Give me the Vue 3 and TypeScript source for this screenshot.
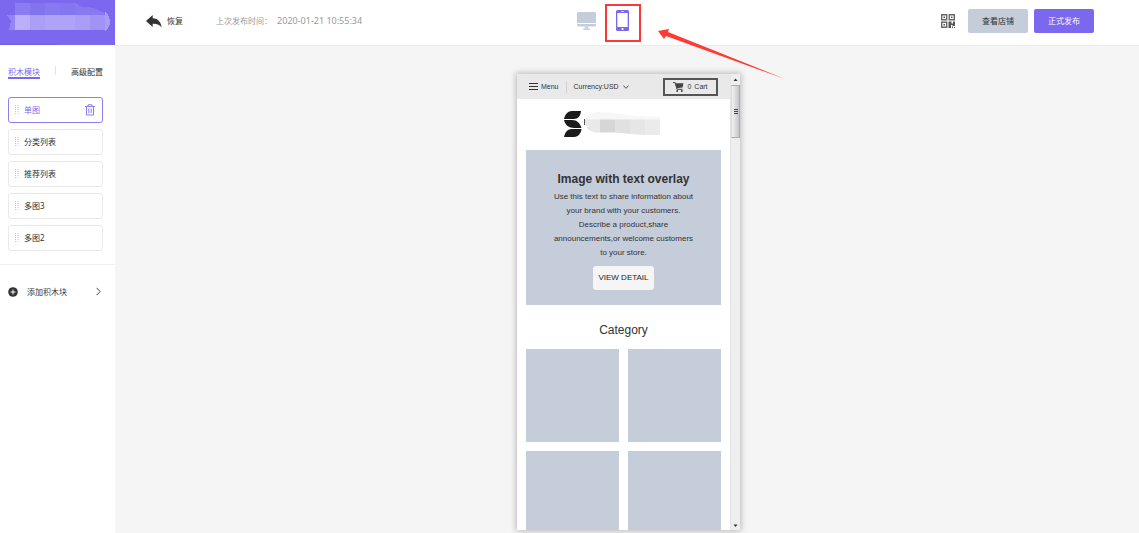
<script setup lang="ts">
import { ref } from 'vue'

interface Block { id: number; name: string }

const blocks: Block[] = [
  { id: 1, name: '单图' },
  { id: 2, name: '分类列表' },
  { id: 3, name: '推荐列表' },
  { id: 4, name: '多图3' },
  { id: 5, name: '多图2' },
]
const activeBlock = ref(1)
const activeTab = ref('blocks')
const lines: string[] = [
  'Use this text to share information about',
  'your brand with your customers.',
  'Describe a product,share',
  'announcements,or welcome customers',
  'to your store.',
]
</script>

<template>
  <div class="app">
    <aside class="sidebar">
      <div class="brand">
        <svg width="115" height="45" viewBox="0 0 115 45" shape-rendering="crispEdges" aria-hidden="true">
          <path d="M15 3h15v12H15z" fill="#8b7cf1" />
          <path d="M30 3h15v12H30z" fill="#8273ef" />
          <path d="M45 3h30l7 4h8l8 3 7 3v2H45z" fill="#8879f1" />
          <path d="M60 3h15v12H60z" fill="#8475f0" />
          <path d="M7 15h8v15H9l2-9z" fill="#9385f2" />
          <path d="M15 15h15v15H15z" fill="#baaff8" />
          <path d="M30 15h15v15H30z" fill="#aa9ef6" />
          <path d="M45 15h30v15H45z" fill="#afa3f7" />
          <path d="M75 15h15v15H75z" fill="#a99df5" />
          <path d="M90 15h15v15H90z" fill="#a093f3" />
          <path d="M105 12l3 3 2 5v4l-2 4-3 3z" fill="#a99df5" />
          <path d="M0 44h57v1H0z" fill="#7160dc" />
        </svg>
      </div>

      <nav class="tabs">
        <button type="button" class="tab" :class="{ on: activeTab === 'blocks' }" @click="activeTab = 'blocks'">积木模块</button>
        <span class="tab-split"></span>
        <button type="button" class="tab" :class="{ on: activeTab === 'config' }" @click="activeTab = 'config'">高级配置</button>
      </nav>

      <ul class="blocks">
        <li v-for="b in blocks" :key="b.id" class="block" :class="{ active: b.id === activeBlock }">
          <button type="button" class="block-name" @click="activeBlock = b.id">
            <svg class="grip" width="4" height="12" viewBox="0 0 4 12" aria-hidden="true">
              <path d="M.5 1v10M3 1v10" stroke="#c4c4cc" stroke-width="1" stroke-dasharray="1 1" />
            </svg>
            {{ b.name }}
          </button>
          <button v-if="b.id === activeBlock" type="button" class="trash" aria-label="删除">
            <svg width="10" height="12" viewBox="0 0 10 12" fill="none" stroke="#8d7df0" aria-hidden="true">
              <path d="M0 2.5h10M3 2.5V.8h4v1.7M1.5 2.5V11h7V2.5M3.8 4.5v4.7M6.2 4.5v4.7" />
            </svg>
          </button>
        </li>
      </ul>

      <button type="button" class="add">
        <svg width="10" height="10" viewBox="0 0 10 10" aria-hidden="true">
          <circle cx="5" cy="5" r="4.8" fill="#333" />
          <path d="M2.5 5h5M5 2.5v5" stroke="#fff" />
        </svg>
        <span class="add-text">添加积木块</span>
        <svg width="5" height="9" viewBox="0 0 5 9" fill="none" stroke="#444" aria-hidden="true">
          <path d="M.5 .8 4.2 4.5 .5 8.2" />
        </svg>
      </button>
    </aside>

    <div class="workspace">
      <header class="topbar">
        <div class="left">
          <button type="button" class="restore">
            <svg width="16" height="13" viewBox="0 0 16 13" aria-hidden="true">
              <path d="M0 6 6.7 0v3.2C12 3.5 15 7 15.6 12.5 13.5 9.5 11 8.5 6.7 8.7V12z" fill="#333" />
            </svg>
            恢复
          </button>
          <p class="published">上次发布时间： <time>2020-01-21 10:55:34</time></p>
        </div>

        <div class="devices">
          <button type="button" class="device" aria-label="电脑">
            <svg width="19" height="18" viewBox="0 0 19 18" aria-hidden="true">
              <path d="M1.5 0h16Q19 0 19 1.5V11H0V1.5Q0 0 1.5 0z" fill="#c5ccda" />
              <path d="M0 12h19v1q0 1.5-1.5 1.5h-16Q0 14.500 0 13z" fill="#c5ccda" />
              <path d="M8 14h3l.5 2.500H13V18H6v-1.500h1.500z" fill="#ccd2df" />
            </svg>
          </button>
          <button type="button" class="device marked" aria-label="手机">
            <svg width="13" height="21" viewBox="0 0 13 21" aria-hidden="true">
              <path fill-rule="evenodd" d="M1.5 0h10Q13 0 13 1.5v18Q13 21 11.5 21h-10Q0 21 0 19.500v-18Q0 0 1.500 0zM1.300 3v14h10.400V3z" fill="#7b68ee" />
              <path d="M5 1.500h3" stroke="#d5cffb" />
              <circle cx="6.500" cy="19" r="1.100" fill="#fff" />
            </svg>
          </button>
          <svg class="pointer" width="128" height="51" viewBox="0 0 128 51" aria-hidden="true">
            <path d="M0 2 11 0 10 3 127 50 8 7 6 10z" fill="#ff3a33" />
          </svg>
        </div>

        <div class="right">
          <button type="button" class="qr" aria-label="二维码">
            <svg width="14" height="14" viewBox="0 0 14 14" aria-hidden="true">
              <path d="M.7.7h5v5h-5zM8.300.7h5v5h-5zM.7 8.300h5v5h-5z" fill="none" stroke="#666" stroke-width="1.400" />
              <path d="M2.500 2.500h1.500v1.500H2.500zM10 2.500h1.500v1.500H10zM2.500 10h1.500v1.500H2.500zM7.500 7.500h3v2h1.500V7.500h2v4.500h-2.500v-1h-1.500v3H7.500zM11 12.500h1V14h-1zM13 13h1v1h-1z" fill="#555" />
            </svg>
          </button>
          <button type="button" class="action view">查看店铺</button>
          <button type="button" class="action publish">正式发布</button>
        </div>
      </header>

      <main class="canvas">
        <section class="phone">
          <div class="screen">
            <div class="shop-bar">
              <button type="button" class="menu">
                <svg width="9" height="7" viewBox="0 0 9 7" aria-hidden="true">
                  <path d="M0 .5h9M0 3.500h9M0 6.500h9" stroke="#333" />
                </svg>
                Menu
              </button>
              <button type="button" class="currency">
                Currency:USD
                <svg width="6" height="4" viewBox="0 0 6 4" fill="none" stroke="#3f5a57" aria-hidden="true">
                  <path d="M.3.500 3 3.300 5.700.500" />
                </svg>
              </button>
              <button type="button" class="cart">
                <svg width="11" height="10" viewBox="0 0 11 10" aria-hidden="true">
                  <path d="M0 .6h2.200L4 7.300h5.500" fill="none" stroke="#444" />
                  <path d="M2.200 1.300H10.500L9.500 5.500 3.500 6.200z" fill="#444" />
                  <circle cx="4.200" cy="8.900" r="1" fill="#444" />
                  <circle cx="8.800" cy="8.900" r="1" fill="#444" />
                </svg>
                <span>0</span><span>Cart</span>
              </button>
            </div>

            <div class="shop-logo">
              <svg width="97" height="26" viewBox="0 0 97 26" aria-hidden="true">
                <path d="M0 8C1 3 4 0 8 0h9c-.5 5-3 8-7 8z" fill="#1b1b1b" />
                <path d="M0 9h8c5 0 8 3 9.500 8H10C5 17 1 14 0 9z" fill="#1b1b1b" />
                <path d="M0 26c1-5 3.500-8 8-8h9.500c-.5 4-3 8-7.500 8z" fill="#1b1b1b" />
                <path d="M20.500 8v6" stroke="#555" />
                <path d="M21 8Q24 1 34 1l15 1 24 3 23 1v3H21z" fill="#f7f7f7" />
                <path d="M21 8.500h15v13h-6l-6-3-3-6z" fill="#e9e9e9" />
                <path d="M36 8.500h15v13H36z" fill="#d6d6d6" />
                <path d="M51 8.500h15V23l-15-1.500z" fill="#e1e1e1" />
                <path d="M66 8.500h15V24l-15-1z" fill="#e6e6e6" />
                <path d="M81 8.500h15V24H81z" fill="#ebebeb" />
              </svg>
            </div>

            <article class="hero">
              <h1>Image with text overlay</h1>
              <p><span v-for="l in lines" :key="l">{{ l }}</span></p>
              <button type="button" class="detail">VIEW DETAIL</button>
            </article>

            <h2>Category</h2>
            <div class="tiles">
              <div v-for="n in 4" :key="n" class="tile"></div>
            </div>
          </div>

          <div class="scroll" aria-hidden="true">
            <svg width="9" height="11" viewBox="0 0 9 11"><path d="M2.500 7 4.500 4.500 6.500 7z" fill="#333" /></svg>
            <div class="thumb"><i></i><i></i><i></i></div>
            <svg class="down" width="9" height="9" viewBox="0 0 9 9"><path d="M2.500 3.500h4L4.500 6z" fill="#333" /></svg>
          </div>
        </section>
      </main>
    </div>
  </div>
</template>

<style>
body { margin: 0; }
</style>

<style scoped>
* { box-sizing: border-box; }
.app {
  display: flex;
  min-height: 100vh;
  font: 8px/12px "Noto Sans", "Noto Sans CJK SC", sans-serif;
  color: #333;
  background: #f5f5f5;
}
button {
  margin: 0;
  padding: 0;
  border: 0;
  background: none;
  color: inherit;
  font: inherit;
  cursor: pointer;
}
svg { display: block; flex: none; }
h1, h2, p, ul { margin: 0; padding: 0; }

.sidebar { flex: none; width: 115px; background: #fff; }
.brand { height: 45px; background: #7b68ee; }
.tabs {
  display: flex;
  align-items: flex-start;
  justify-content: space-between;
  padding: 21px 12px 0 8px;
}
.tab { height: 13px; border-bottom: 2px solid transparent; line-height: 11px; }
.tab.on { color: #7b68ee; border-color: #7b68ee; }
.tab-split { width: 1px; height: 9px; background: #e4e4e4; }
.blocks {
  display: flex;
  flex-direction: column;
  gap: 6px;
  padding: 18px 12px 13px 8px;
  list-style: none;
  border-bottom: 1px solid #f0f0f0;
}
.block {
  display: flex;
  align-items: center;
  height: 26px;
  padding: 0 7px 0 6px;
  border: 1px solid #e9e9e9;
  border-radius: 3px;
}
.block.active { border-color: #8d7df0; color: #7b68ee; }
.block-name { display: flex; flex: 1; align-items: center; gap: 5px; height: 100%; }
.add {
  display: flex;
  align-items: center;
  width: 100%;
  height: 53px;
  padding: 0 14px 0 8px;
}
.add-text { flex: 1; margin-left: 9px; text-align: left; }

.workspace { display: flex; flex: 1; flex-direction: column; min-width: 0; }
.topbar {
  display: grid;
  grid-template-columns: 1fr auto 1fr;
  align-items: center;
  height: 46px;
  padding: 0 45px 3px 31px;
  background: #fff;
  border-bottom: 1px solid #ebebeb;
}
.left { display: flex; align-items: center; gap: 33px; }
.restore { display: flex; align-items: center; gap: 5px; }
.published { color: #999; white-space: pre; }
.published time { margin-left: 3px; font-size: 9px; }
.devices { position: relative; display: flex; align-items: center; gap: 9px; padding: 3px 23px 0 0; }
.device { padding-bottom: 4px; }
.marked {
  display: flex;
  align-items: center;
  justify-content: center;
  width: 36px;
  height: 38px;
  border: 2px solid #fa3a3a;
}
.pointer { position: absolute; left: 81px; top: 28px; z-index: 2; pointer-events: none; }
.right { display: flex; align-items: center; justify-content: flex-end; gap: 6px; }
.qr { margin-right: 7px; }
.action { width: 60px; height: 24px; border-radius: 2px; background: #c5ccda; }
.publish { background: #7b68ee; color: #fff; }

.canvas { display: flex; flex: 1; justify-content: center; padding: 28px 0 3px 3px; }
.phone {
  display: flex;
  width: 223px;
  height: calc(100vh - 77px);
  overflow: hidden;
  background: #fff;
  box-shadow: 0 0 6px 1px rgba(0, 0, 0, 0.25);
}
.screen {
  flex: 1;
  min-width: 0;
  overflow: hidden;
  font-family: "Liberation Sans", Arial, sans-serif;
}
.shop-bar {
  display: flex;
  align-items: center;
  height: 25px;
  padding: 0 12px;
  background: #e9e9e9;
  font-size: 7px;
}
.menu { display: flex; align-items: center; gap: 3px; padding-right: 7px; border-right: 1px solid #d2d2d2; }
.currency { display: flex; align-items: center; gap: 4px; margin-left: 7px; }
.cart {
  display: flex;
  align-items: center;
  justify-content: center;
  gap: 3px;
  width: 55px;
  height: 18px;
  margin-left: auto;
  border: 2px solid #555;
}
.shop-logo { padding: 12px 0 13px 47px; }
.hero {
  height: 155px;
  margin: 0 9px;
  padding: 20px 0 0;
  background: #c5ccda;
  text-align: center;
}
h1 { font-size: 12px; line-height: 18px; }
.hero p { margin-bottom: 6px; padding-top: 2px; line-height: 14px; }
.hero span { display: block; }
.detail { width: 61px; height: 24px; border-radius: 3px; background: #f5f5f5; color: #222; }
h2 { padding: 16px 0 10px; font-size: 12px; font-weight: 400; line-height: 18px; text-align: center; }
.tiles { display: grid; grid-template-columns: 1fr 1fr; gap: 9px; padding: 0 9px; }
.tile { aspect-ratio: 1; background: #c5ccda; }
.scroll { display: flex; flex: none; flex-direction: column; width: 10px; border-left: 1px solid #e4e4e4; background: #eee; }
.thumb {
  display: flex;
  flex-direction: column;
  align-items: center;
  justify-content: center;
  gap: 1px;
  height: 53px;
  border: 1px solid #aaa;
  border-left-color: #ddd;
  background: linear-gradient(to right, #f2f2f2, #c6c6ca);
}
.thumb i { width: 4px; height: 1px; background: #444; }
.down { margin-top: auto; }
</style>
